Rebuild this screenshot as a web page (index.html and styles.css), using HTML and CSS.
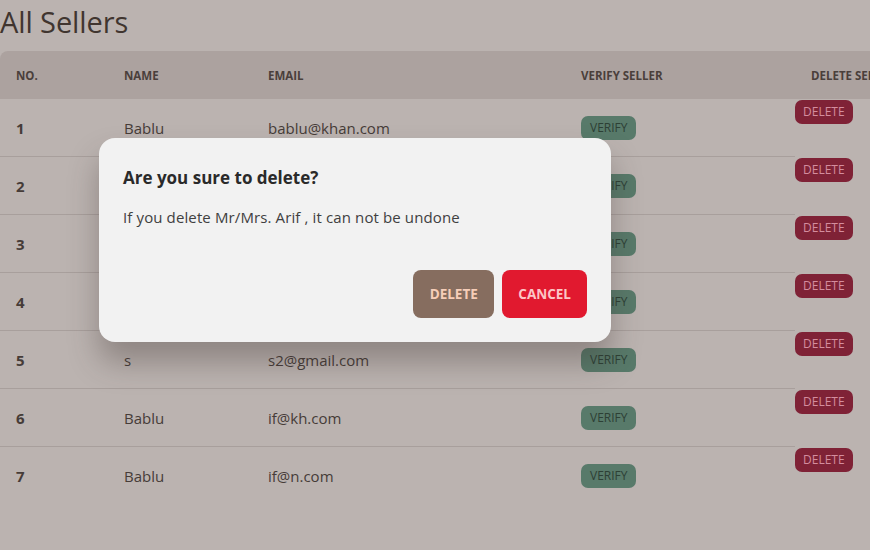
FILE: index.html
```html
<!DOCTYPE html>
<html>
<head>
<meta charset="utf-8">
<link rel="stylesheet" href="styles.css">
</head>
<body>
<div class="page">
  <h1 class="title">All Sellers</h1>
  <table class="sellers">
    <thead>
      <tr>
        <th class="c-no">No.</th>
        <th class="c-name">Name</th>
        <th class="c-email">Email</th>
        <th class="c-verify">Verify Seller</th>
        <th class="c-del">Delete Seller</th>
      </tr>
    </thead>
    <tbody>
      <tr><td class="num">1</td><td>Bablu</td><td>bablu@khan.com</td><td><span class="btn-verify">VERIFY</span></td><td class="del-cell"><span class="btn-del">DELETE</span></td></tr>
      <tr><td class="num">2</td><td>Bablu</td><td>bablu@khan.com</td><td><span class="btn-verify">VERIFY</span></td><td class="del-cell"><span class="btn-del">DELETE</span></td></tr>
      <tr><td class="num">3</td><td>Bablu</td><td>bablu@khan.com</td><td><span class="btn-verify">VERIFY</span></td><td class="del-cell"><span class="btn-del">DELETE</span></td></tr>
      <tr><td class="num">4</td><td>Arif</td><td>arif@khan.com</td><td><span class="btn-verify">VERIFY</span></td><td class="del-cell"><span class="btn-del">DELETE</span></td></tr>
      <tr><td class="num">5</td><td>s</td><td>s2@gmail.com</td><td><span class="btn-verify">VERIFY</span></td><td class="del-cell"><span class="btn-del">DELETE</span></td></tr>
      <tr><td class="num">6</td><td>Bablu</td><td>if@kh.com</td><td><span class="btn-verify">VERIFY</span></td><td class="del-cell"><span class="btn-del">DELETE</span></td></tr>
      <tr class="last"><td class="num">7</td><td>Bablu</td><td>if@n.com</td><td><span class="btn-verify">VERIFY</span></td><td class="del-cell"><span class="btn-del">DELETE</span></td></tr>
    </tbody>
  </table>
</div>
<div class="modal">
  <h3 class="modal-title">Are you sure to delete?</h3>
  <p class="modal-text">If you delete Mr/Mrs. Arif , it can not be undone</p>
  <div class="modal-actions">
    <button class="mbtn mbtn-delete">DELETE</button>
    <button class="mbtn mbtn-cancel">CANCEL</button>
  </div>
</div>
</body>
</html>
```
FILE: styles.css
```css
html, body {
  margin: 0;
  padding: 0;
  width: 870px;
  height: 550px;
  overflow: hidden;
  background: #bbb3b0;
  font-family: "Open Sans", "Noto Sans", sans-serif;
  color: #3f3734;
}
.page {
  width: 1000px;
}
.title {
  margin: 0;
  font-size: 29px;
  font-weight: 400;
  line-height: 44px;
  height: 51px;
  color: #40352f;
  letter-spacing: -0.1px;
}
.sellers {
  border-collapse: separate;
  border-spacing: 0;
  table-layout: fixed;
  width: 1000px;
}
.sellers th {
  background: #aca29f;
  height: 48px;
  padding: 0 16px;
  text-align: left;
  font-size: 11.5px;
  font-weight: 700;
  text-transform: uppercase;
  color: #4a3f3b;
  box-sizing: border-box;
}
.sellers th:first-child { border-top-left-radius: 8px; }
.c-no { width: 108px; }
.c-name { width: 144px; }
.c-email { width: 313px; }
.c-verify { width: 230px; }
.sellers td {
  height: 58px;
  box-sizing: border-box;
  padding: 0 16px;
  font-size: 15px;
  color: #463c38;
  border-bottom: 1px solid #a89f9c;
  vertical-align: middle;
}
.sellers tr.last td { border-bottom: none; }
.sellers td.num { font-weight: 700; }
.sellers td.del-cell {
  border-bottom: none;
  padding: 1px 0 0;
  vertical-align: top;
}
.btn-verify, .btn-del {
  display: inline-block;
  height: 24px;
  line-height: 24px;
  padding: 0 9px;
  border-radius: 7px;
  font-size: 12px;
  box-sizing: border-box;
}
.btn-verify {
  background: #587a6a;
  color: #2d4035;
}
.btn-del {
  background: #7f2236;
  color: #d48d9e;
  padding: 0 8px;
}
.modal {
  position: absolute;
  left: 99px;
  top: 138px;
  width: 512px;
  height: 204px;
  box-sizing: border-box;
  padding: 24px;
  background: #f2f2f2;
  border-radius: 16px;
  box-shadow: 0 20px 30px rgba(60, 50, 45, 0.35);
  display: flex;
  flex-direction: column;
}
.modal-title {
  margin: 0;
  padding-top: 4px;
  font-size: 17px;
  font-weight: 700;
  color: #2a2a2a;
  line-height: 24px;
}
.modal-text {
  margin: 16px 0 0;
  font-size: 15px;
  letter-spacing: 0.12px;
  line-height: 22px;
  color: #404040;
}
.modal-actions {
  margin-top: auto;
  display: flex;
  justify-content: flex-end;
  gap: 8px;
}
.mbtn {
  height: 48px;
  border: none;
  border-radius: 8px;
  padding: 0 16px;
  font-family: "Open Sans", "Noto Sans", sans-serif;
  font-size: 13.5px;
  font-weight: 700;
}
.mbtn-delete {
  background: #866d5f;
  color: #f6cdb8;
  padding: 0 16.5px;
}
.mbtn-cancel {
  background: #e1192f;
  color: #fcc6c6;
}
```
